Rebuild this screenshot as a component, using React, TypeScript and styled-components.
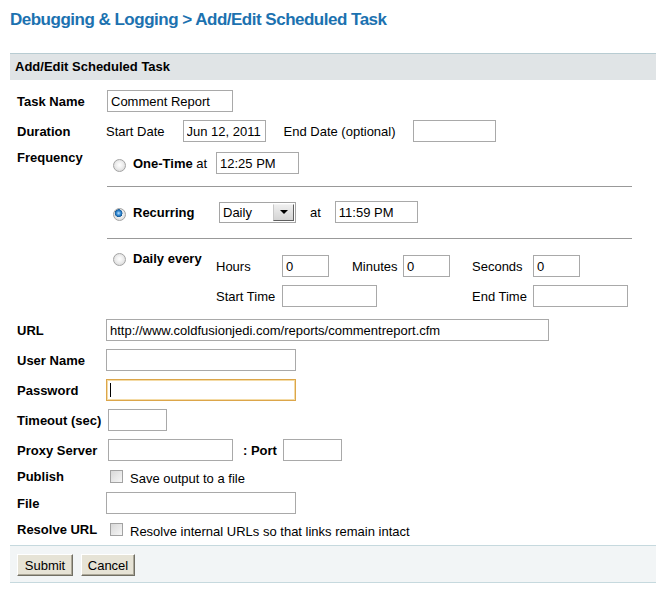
import styled, { createGlobalStyle } from 'styled-components';

const GlobalStyle = createGlobalStyle`
  body {
    margin: 0;
    background: #fff;
    color: #000;
    font-family: "Liberation Sans", Arial, sans-serif;
    font-size: 13px;
  }
`;

const Title = styled.h1`
  margin: 0 0 23px;
  padding: 10px 0 0 10px;
  font-size: 17px;
  line-height: 20px;
  letter-spacing: -0.5px;
  font-weight: bold;
  color: #1c72b0;
`;

const Panel = styled.section`
  margin-left: 10px;
`;

const PanelHeader = styled.div`
  border-top: 1px solid #b8ccd2;
  background: #e0e4e6;
  height: 26px;
  line-height: 26px;
  padding-left: 5px;
  font-weight: bold;
`;

const Body = styled.div`
  padding-top: 6px;
`;

const Row = styled.div<{ $h?: number; $align?: string }>`
  display: grid;
  grid-template-columns: 96px 1fr;
  min-height: ${(p) => p.$h ?? 30}px;
  align-items: ${(p) => p.$align ?? 'center'};
`;

const Label = styled.div<{ $top?: number }>`
  padding: ${(p) => p.$top ?? 0}px 0 0 7px;
  font-weight: bold;
  line-height: 15px;
  white-space: nowrap;
`;

const Field = styled.div<{ $gap?: number }>`
  display: flex;
  align-items: center;
  gap: ${(p) => p.$gap ?? 0}px;
`;

const TextInput = styled.input<{ $w: number; $ml?: number; $mr?: number }>`
  box-sizing: border-box;
  width: ${(p) => p.$w}px;
  height: 22px;
  margin: 0 ${(p) => p.$mr ?? 0}px 0 ${(p) => p.$ml ?? 0}px;
  padding: 0 3px;
  border: 1px solid #a9a9a9;
  background: #fff;
  font: 13px "Liberation Sans", Arial, sans-serif;
  color: #000;
  outline: none;
`;

const FocusWrap = styled.span`
  position: relative;
  display: inline-flex;
`;

const FocusInput = styled(TextInput)`
  border-color: #dca64a;
  box-shadow: inset 0 0 0 1px #f4dba6;
`;

const Caret = styled.span`
  position: absolute;
  left: 4px;
  top: 4px;
  width: 1px;
  height: 14px;
  background: #000;
`;

const Plain = styled.span`
  line-height: 15px;
  white-space: nowrap;
`;

const Bold = styled.span`
  font-weight: bold;
  line-height: 15px;
  white-space: nowrap;
`;

const Options = styled.div`
  display: flex;
  flex-direction: column;
`;

const Option = styled.div<{ $pad: string; $align?: string }>`
  display: grid;
  grid-template-columns: 110px 1fr;
  align-items: ${(p) => p.$align ?? 'center'};
  padding: ${(p) => p.$pad};
`;

const Choice = styled.label<{ $align?: string }>`
  display: flex;
  align-items: ${(p) => p.$align ?? 'center'};
  gap: 7px;
  padding-left: 7px;
`;

const Radio = styled.input.attrs({ type: 'radio' })<{ $mt?: number }>`
  appearance: none;
  flex: none;
  width: 13px;
  height: 13px;
  margin: ${(p) => p.$mt ?? 4}px 0 0;
  border: 1px solid #a3a3a3;
  border-radius: 50%;
  box-sizing: border-box;
  background: radial-gradient(circle at 50% 45%, #ffffff 0, #ededed 45%, #cfcfcf 100%);

  &:checked {
    background:
      radial-gradient(circle at 42% 38%, #bfe3ff 0, #3a8ed6 22%, #0f5696 40%, transparent 43%),
      radial-gradient(circle at 50% 45%, #ffffff 0, #ededed 45%, #cfcfcf 100%);
  }
`;

const Divider = styled.div`
  width: 525px;
  height: 1px;
  margin-left: 1px;
  background: #999;
`;

const SelectBox = styled.div`
  box-sizing: border-box;
  display: flex;
  width: 77px;
  height: 21px;
  margin-left: 3px;
  padding: 1px;
  border: 1px solid #a5a5a5;
  background: #fff;
`;

const SelectValue = styled.span`
  flex: 1;
  padding-left: 2px;
  line-height: 17px;
`;

const SelectArrow = styled.span`
  box-sizing: border-box;
  width: 21px;
  display: flex;
  align-items: center;
  justify-content: center;
  border: 1px solid;
  border-color: #f4f4f4 #5f5f5f #5f5f5f #c8c8c8;
  background: linear-gradient(#eeeeee, #d4d4d4);

  &::after {
    content: '';
    border-left: 4px solid transparent;
    border-right: 4px solid transparent;
    border-top: 4px solid #000;
  }
`;

const TimeGrid = styled.div`
  display: grid;
  grid-template-columns: 66px 70px 51px 69px 61px auto;
  row-gap: 8px;
  align-items: center;
  margin-top: 4px;
`;

const Span3 = styled.div`
  grid-column: span 3;
  display: flex;
`;

const CheckRow = styled.label`
  display: flex;
  align-items: center;
  gap: 7px;
  padding-left: 4px;
`;

const CheckText = styled(Plain)`
  padding-top: 3px;
`;

const Checkbox = styled.input.attrs({ type: 'checkbox' })`
  appearance: none;
  flex: none;
  width: 13px;
  height: 13px;
  margin: 0;
  box-sizing: border-box;
  border: 1px solid #a2a2a2;
  background: linear-gradient(135deg, #d8d8d8, #f6f6f6);
`;

const Footer = styled.div`
  display: flex;
  gap: 8px;
  margin-top: 4px;
  padding: 8px 7px 6px;
  border-top: 1px solid #c6d9de;
  border-bottom: 1px solid #c6d9de;
  background: #f2f5f6;
`;

const Button = styled.button<{ $w: number }>`
  box-sizing: border-box;
  width: ${(p) => p.$w}px;
  height: 22px;
  padding: 0;
  border: 1px solid;
  border-color: #ffffff #716f64 #716f64 #ffffff;
  box-shadow: inset -1px -1px #aca899;
  background: #e6e3d6;
  font: 13px "Liberation Sans", Arial, sans-serif;
  color: #000;
`;

export default function App() {
  return (
    <>
      <GlobalStyle />
      <Title>Debugging &amp; Logging &gt; Add/Edit Scheduled Task</Title>
      <Panel>
        <PanelHeader>Add/Edit Scheduled Task</PanelHeader>
        <Body>
          <Row>
            <Label>Task Name</Label>
            <Field>
              <TextInput $w={126} $ml={1} defaultValue="Comment Report" />
            </Field>
          </Row>
          <Row>
            <Label>Duration</Label>
            <Field $gap={18}>
              <Plain>Start Date</Plain>
              <TextInput $w={83} defaultValue="Jun 12, 2011" />
              <Plain>End Date (optional)</Plain>
              <TextInput $w={83} $ml={-1} />
            </Field>
          </Row>
          <Row $align="start">
            <Label $top={4}>Frequency</Label>
            <Options>
              <Option $pad="6px 0 12px">
                <Choice>
                  <Radio name="freq" />
                  <span>
                    <Bold>One-Time</Bold> <Plain>at</Plain>
                  </span>
                </Choice>
                <Field>
                  <TextInput $w={83} defaultValue="12:25 PM" />
                </Field>
              </Option>
              <Divider />
              <Option $pad="14px 0 15px">
                <Choice>
                  <Radio name="freq" defaultChecked />
                  <Bold>Recurring</Bold>
                </Choice>
                <Field $gap={14}>
                  <SelectBox>
                    <SelectValue>Daily</SelectValue>
                    <SelectArrow />
                  </SelectBox>
                  <Plain>at</Plain>
                  <TextInput $w={83} defaultValue="11:59 PM" />
                </Field>
              </Option>
              <Divider />
              <Option $pad="12px 0 8px" $align="start">
                <Choice $align="flex-start">
                  <Radio name="freq" $mt={2} />
                  <Bold>Daily every</Bold>
                </Choice>
                <TimeGrid>
                  <Plain>Hours</Plain>
                  <TextInput $w={47} defaultValue="0" />
                  <Plain>Minutes</Plain>
                  <TextInput $w={47} defaultValue="0" />
                  <Plain>Seconds</Plain>
                  <TextInput $w={47} defaultValue="0" />
                  <Plain>Start Time</Plain>
                  <Span3>
                    <TextInput $w={95} />
                  </Span3>
                  <Plain>End Time</Plain>
                  <TextInput $w={95} />
                </TimeGrid>
              </Option>
            </Options>
          </Row>
          <Row>
            <Label>URL</Label>
            <Field>
              <TextInput $w={443} defaultValue="http://www.coldfusionjedi.com/reports/commentreport.cfm" />
            </Field>
          </Row>
          <Row>
            <Label>User Name</Label>
            <Field>
              <TextInput $w={190} />
            </Field>
          </Row>
          <Row>
            <Label>Password</Label>
            <Field>
              <FocusWrap>
                <FocusInput $w={190} type="password" />
                <Caret />
              </FocusWrap>
            </Field>
          </Row>
          <Row>
            <Label>Timeout (sec)</Label>
            <Field>
              <TextInput $w={59} $ml={2} />
            </Field>
          </Row>
          <Row>
            <Label>Proxy Server</Label>
            <Field>
              <TextInput $w={125} $ml={2} $mr={10} />
              <Bold>: Port</Bold>
              <TextInput $w={59} $ml={6} />
            </Field>
          </Row>
          <Row $h={23}>
            <Label>Publish</Label>
            <CheckRow>
              <Checkbox />
              <CheckText>Save output to a file</CheckText>
            </CheckRow>
          </Row>
          <Row>
            <Label>File</Label>
            <Field>
              <TextInput $w={190} />
            </Field>
          </Row>
          <Row $h={23}>
            <Label>Resolve URL</Label>
            <CheckRow>
              <Checkbox />
              <CheckText>Resolve internal URLs so that links remain intact</CheckText>
            </CheckRow>
          </Row>
        </Body>
        <Footer>
          <Button $w={56}>Submit</Button>
          <Button $w={54}>Cancel</Button>
        </Footer>
      </Panel>
    </>
  );
}
